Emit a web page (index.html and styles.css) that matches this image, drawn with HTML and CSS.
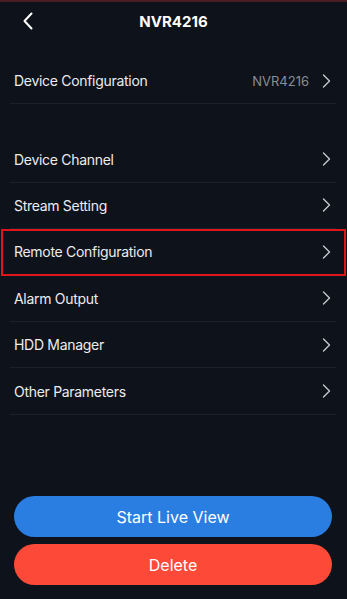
FILE: index.html
```html
<!DOCTYPE html>
<html lang="en">
<head>
    <meta charset="UTF-8">
    <meta name="viewport" content="width=device-width, initial-scale=1.0">
    <title>NVR4216</title>
    <link rel="stylesheet" href="styles.css">
</head>
<body>
    <div class="page">
        <div class="nav">
            <span class="back">
                <svg width="12" height="18" viewBox="0 0 12 18"><path d="M9.5 1.5 L2.5 9 L9.5 16.5" fill="none" stroke="#fff" stroke-width="2" stroke-linecap="round" stroke-linejoin="round"/></svg>
            </span>
            <h1>NVR4216</h1>
        </div>

        <ul class="list first">
            <li class="item">
                <div class="row">
                    <span class="label">Device Configuration</span>
                    <span class="value">NVR4216</span>
                    <svg class="chev" width="9" height="14" viewBox="0 0 9 14"><path d="M1.5 1 L7.5 7 L1.5 13" fill="none" stroke="#c4c6ca" stroke-width="1.4" stroke-linecap="round" stroke-linejoin="round"/></svg>
                </div>
            </li>
        </ul>

        <ul class="list">
            <li class="item">
                <div class="row">
                    <span class="label">Device Channel</span>
                    <svg class="chev" width="9" height="14" viewBox="0 0 9 14"><path d="M1.5 1 L7.5 7 L1.5 13" fill="none" stroke="#c4c6ca" stroke-width="1.4" stroke-linecap="round" stroke-linejoin="round"/></svg>
                </div>
            </li>
            <li class="item">
                <div class="row">
                    <span class="label">Stream Setting</span>
                    <svg class="chev" width="9" height="14" viewBox="0 0 9 14"><path d="M1.5 1 L7.5 7 L1.5 13" fill="none" stroke="#c4c6ca" stroke-width="1.4" stroke-linecap="round" stroke-linejoin="round"/></svg>
                </div>
            </li>
            <li class="item highlight">
                <div class="row">
                    <span class="label">Remote Configuration</span>
                    <svg class="chev" width="9" height="14" viewBox="0 0 9 14"><path d="M1.5 1 L7.5 7 L1.5 13" fill="none" stroke="#c4c6ca" stroke-width="1.4" stroke-linecap="round" stroke-linejoin="round"/></svg>
                </div>
            </li>
            <li class="item">
                <div class="row">
                    <span class="label">Alarm Output</span>
                    <svg class="chev" width="9" height="14" viewBox="0 0 9 14"><path d="M1.5 1 L7.5 7 L1.5 13" fill="none" stroke="#c4c6ca" stroke-width="1.4" stroke-linecap="round" stroke-linejoin="round"/></svg>
                </div>
            </li>
            <li class="item">
                <div class="row">
                    <span class="label">HDD Manager</span>
                    <svg class="chev" width="9" height="14" viewBox="0 0 9 14"><path d="M1.5 1 L7.5 7 L1.5 13" fill="none" stroke="#c4c6ca" stroke-width="1.4" stroke-linecap="round" stroke-linejoin="round"/></svg>
                </div>
            </li>
            <li class="item">
                <div class="row">
                    <span class="label">Other Parameters</span>
                    <svg class="chev" width="9" height="14" viewBox="0 0 9 14"><path d="M1.5 1 L7.5 7 L1.5 13" fill="none" stroke="#c4c6ca" stroke-width="1.4" stroke-linecap="round" stroke-linejoin="round"/></svg>
                </div>
            </li>
        </ul>

        <div class="actions">
            <button class="btn live">Start Live View</button>
            <button class="btn delete">Delete</button>
        </div>
    </div>
</body>
</html>
```

FILE: styles.css
```css
html, body {
    margin: 0;
    padding: 0;
    background-color: #0e121a;
}
body {
    font-family: Inter, "Noto Sans", Arial, sans-serif;
    color: #ececee;
}
.page {
    display: flex;
    flex-direction: column;
    height: 100vh;
    box-sizing: border-box;
    border-top: 2px solid #4b1c24;
}
.nav {
    position: relative;
    height: 38px;
    display: flex;
    align-items: center;
    justify-content: center;
}
.nav h1 {
    margin: 0;
    font-size: 15px;
    font-weight: 700;
    color: #fff;
}
.back {
    position: absolute;
    left: 22px;
    top: 10px;
    display: flex;
}
.list {
    list-style: none;
    margin: 0;
    padding: 0;
}
.list.first {
    margin-top: 18px;
    margin-bottom: 32px;
}
.item {
    height: 46.4px;
}
.row {
    height: 100%;
    box-sizing: border-box;
    margin: 0 11px 0 10px;
    padding: 0 5px 0 4px;
    display: flex;
    align-items: center;
    border-bottom: 1px solid #1d2129;
}
.label {
    flex: 1;
    font-size: 14px;
    letter-spacing: -0.3px;
}
.value {
    font-size: 13px;
    color: #8b8e94;
    margin-right: 13px;
}
.highlight {
    outline: 2px solid #e0141d;
    outline-offset: -2px;
    margin: 0 1px;
}
.highlight .row {
    margin: 0 10px 0 9px;
    border-bottom-color: transparent;
}
.actions {
    margin-top: auto;
    padding: 0 15px 14px 14px;
    display: flex;
    flex-direction: column;
    gap: 7px;
}
.btn {
    height: 41px;
    border: none;
    border-radius: 21px;
    color: #fff;
    font-family: inherit;
    font-size: 16px;
}
.btn.live {
    background-color: #2a7ee2;
}
.btn.delete {
    background-color: #fd4a38;
}
```
